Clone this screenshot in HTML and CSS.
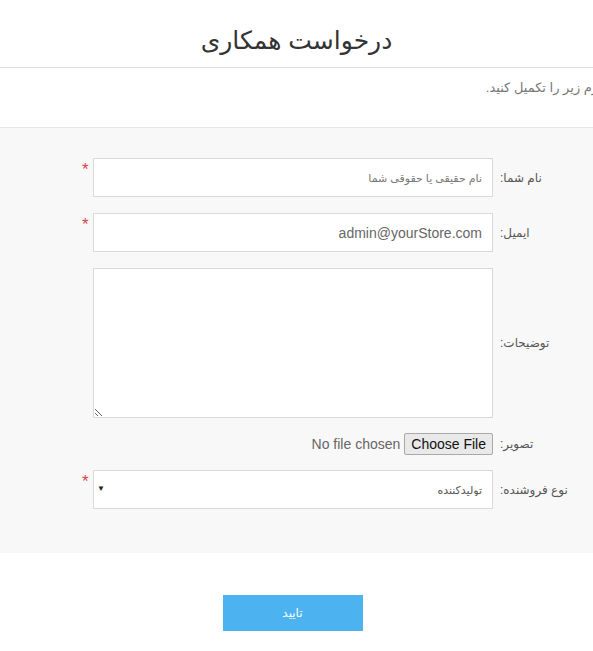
FILE: index.html
```html
<!DOCTYPE html>
<html lang="fa" dir="rtl">
<head>
    <meta charset="UTF-8">
    <meta name="viewport" content="width=device-width, initial-scale=1.0">
    <title>درخواست همکاری</title>
    <link rel="stylesheet" href="styles.css">
</head>
<body>
    <div class="page-title">
        <h1>درخواست همکاری</h1>
    </div>
    <div class="intro">
        <p>لطفا فرم زیر را تکمیل کنید.</p>
    </div>
    <form class="form-area">
        <div class="row">
            <label class="label" for="name">نام شما:</label>
            <div class="field required">
                <input type="text" id="name" placeholder="نام حقیقی یا حقوقی شما">
            </div>
        </div>
        <div class="row">
            <label class="label" for="email">ایمیل:</label>
            <div class="field required">
                <input type="text" id="email" class="ltr-value" value="admin@yourStore.com">
            </div>
        </div>
        <div class="row">
            <label class="label" for="desc">توضیحات:</label>
            <div class="field">
                <textarea id="desc"></textarea>
            </div>
        </div>
        <div class="row row-file">
            <label class="label" for="photo">تصویر:</label>
            <div class="field">
                <input type="file" id="photo" class="file-input">
            </div>
        </div>
        <div class="row">
            <label class="label" for="type">نوع فروشنده:</label>
            <div class="field required select-wrap">
                <select id="type">
                    <option>تولیدکننده</option>
                    <option>توزیع‌کننده</option>
                </select>
            </div>
        </div>
    </form>
    <div class="actions">
        <button type="button" class="btn-submit">تایید</button>
    </div>
</body>
</html>
```

FILE: styles.css
```css
body {
    margin: 0;
    font-family: "Liberation Sans", "DejaVu Sans", sans-serif;
    color: #333;
    background: #fff;
    overflow-x: hidden;
}
.page-title {
    height: 67px;
    border-bottom: 1px solid #ddd;
    text-align: center;
}
.page-title h1 {
    margin: 0;
    padding-top: 24px;
    font-size: 25px;
    font-weight: normal;
    line-height: 32px;
    color: #333;
}
.intro {
    height: 59px;
    border-bottom: 1px solid #e6e6e6;
}
.intro p {
    margin: 0 -41px 0 0;
    padding-top: 12px;
    font-size: 13px;
    color: #777;
}
.form-area {
    background: #f8f8f8;
    padding: 30px 0 44px;
}
.row {
    display: flex;
    align-items: center;
    margin-bottom: 16px;
}
.row:last-child {
    margin-bottom: 0;
}
.label {
    width: 93px;
    margin-right: 7px;
    padding-left: 7px;
    box-sizing: border-box;
    text-align: left;
    font-size: 12px;
    color: #555;
}
.field {
    position: relative;
    width: 400px;
}
.required::after {
    content: "*";
    position: absolute;
    left: -11px;
    top: 2px;
    color: #d9434f;
    font-size: 17px;
}
.field input[type="text"],
.field textarea,
.field select {
    display: block;
    width: 100%;
    box-sizing: border-box;
    height: 39px;
    border: 1px solid #d9d9d9;
    background: #fff;
    padding: 0 10px;
    font-family: "Liberation Sans", "DejaVu Sans", sans-serif;
    font-size: 11px;
    color: #555;
    border-radius: 0;
    outline: none;
}
.field input::placeholder {
    color: #777;
}
.field input.ltr-value {
    font-size: 14px;
    color: #666;
}
.field textarea {
    height: 150px;
    resize: both;
}
.row-file .field {
    height: 20px;
}
.file-input {
    font-family: "Liberation Sans", sans-serif;
    font-size: 14px;
    color: #666;
    direction: rtl;
    margin-top: -1px;
}
.file-input::file-selector-button {
    font-family: "Liberation Sans", sans-serif;
    font-size: 14px;
    color: #111;
    background: #e9e9e9;
    border: 1px solid #a9a9a9;
    border-radius: 2px;
    padding: 2px 6px;
    margin: 0 0 0 4px;
}
.select-wrap select {
    appearance: none;
    -webkit-appearance: none;
}
.select-wrap::before {
    content: "\25BC";
    position: absolute;
    left: 4px;
    top: 14px;
    font-size: 8px;
    color: #222;
    pointer-events: none;
}
.actions {
    padding: 42px 0 20px;
    text-align: center;
}
.btn-submit {
    width: 140px;
    height: 36px;
    border: 0;
    background: #4db3f0;
    color: #fff;
    font-family: "DejaVu Sans", sans-serif;
    font-size: 12px;
    margin-right: 8px;
}
```
